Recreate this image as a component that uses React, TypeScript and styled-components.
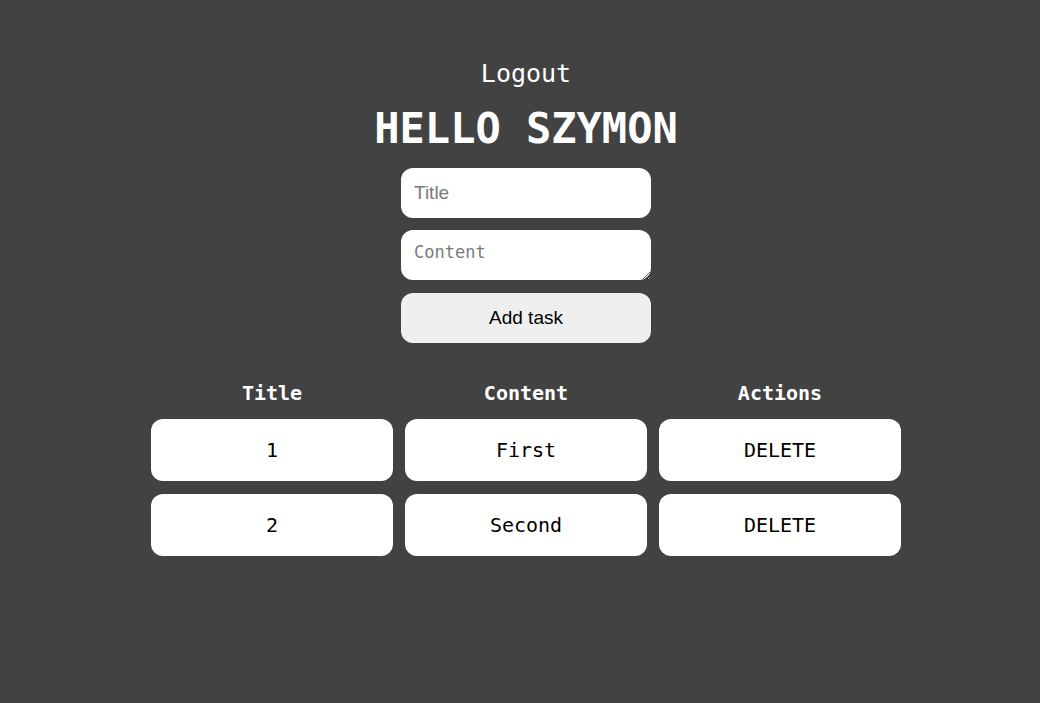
import React from "react";
import styled, { createGlobalStyle } from "styled-components";

const Global = createGlobalStyle`
  html, body { margin: 0; padding: 0; background: #424242; }
  body { font-family: "DejaVu Sans Mono", "Liberation Mono", monospace; }
`;

const Page = styled.div`
  min-height: 703px;
  padding: 57px 0 0 12px;
  display: flex;
  flex-direction: column;
  align-items: center;
  box-sizing: border-box;
`;

const LogoutLink = styled.a`
  color: #ffffff;
  font-size: 25px;
  line-height: 34px;
  cursor: pointer;
`;

const Heading = styled.h1`
  margin: 13px 0 0;
  color: #ffffff;
  font-size: 42px;
  line-height: 50px;
  font-weight: bold;
`;

const Form = styled.form`
  margin-top: 14px;
  display: flex;
  flex-direction: column;
  gap: 12px;
  width: 250px;
`;

const Field = styled.input`
  box-sizing: border-box;
  width: 250px;
  height: 50px;
  border: none;
  border-radius: 12px;
  background: #fff;
  padding: 0 13px;
  font-family: "Liberation Sans", Arial, sans-serif;
  font-size: 19px;
  outline: none;
  &::placeholder { color: #7a7a7a; }
`;

const Area = styled.textarea`
  box-sizing: border-box;
  width: 250px;
  height: 50px;
  border: none;
  border-radius: 12px;
  background: #fff;
  padding: 12px 13px;
  font-family: "DejaVu Sans Mono", monospace;
  font-size: 17px;
  outline: none;
  resize: vertical;
  display: block;
  &::placeholder { color: #7a7a7a; }
`;

const AddButton = styled.button`
  margin-top: 1px;
  width: 250px;
  height: 50px;
  border: none;
  border-radius: 12px;
  background: #efefef;
  color: #000;
  font-family: "Liberation Sans", Arial, sans-serif;
  font-size: 19px;
  cursor: pointer;
`;

const Table = styled.div`
  margin-top: 37px;
  display: grid;
  grid-template-columns: repeat(3, 242px);
  column-gap: 12px;
  row-gap: 13px;
`;

const HeadCell = styled.div`
  color: #fff;
  font-weight: bold;
  font-size: 20px;
  line-height: 26px;
  text-align: center;
  margin-bottom: 0;
`;

const Cell = styled.div<{ $action?: boolean }>`
  height: 62px;
  border-radius: 12px;
  background: #fff;
  color: #000;
  display: flex;
  align-items: center;
  justify-content: center;
  font-size: 20px;
  cursor: ${(p) => (p.$action ? "pointer" : "default")};
`;

const tasks = [
  { title: "1", content: "First" },
  { title: "2", content: "Second" },
];

export default function App() {
  return (
    <>
      <Global />
      <Page>
        <LogoutLink>Logout</LogoutLink>
        <Heading>HELLO SZYMON</Heading>
        <Form onSubmit={(e) => e.preventDefault()}>
          <Field placeholder="Title" />
          <Area placeholder="Content" />
          <AddButton type="submit">Add task</AddButton>
        </Form>
        <Table>
          <HeadCell>Title</HeadCell>
          <HeadCell>Content</HeadCell>
          <HeadCell>Actions</HeadCell>
          {tasks.map((t) => (
            <React.Fragment key={t.title}>
              <Cell>{t.title}</Cell>
              <Cell>{t.content}</Cell>
              <Cell $action>DELETE</Cell>
            </React.Fragment>
          ))}
        </Table>
      </Page>
    </>
  );
}
